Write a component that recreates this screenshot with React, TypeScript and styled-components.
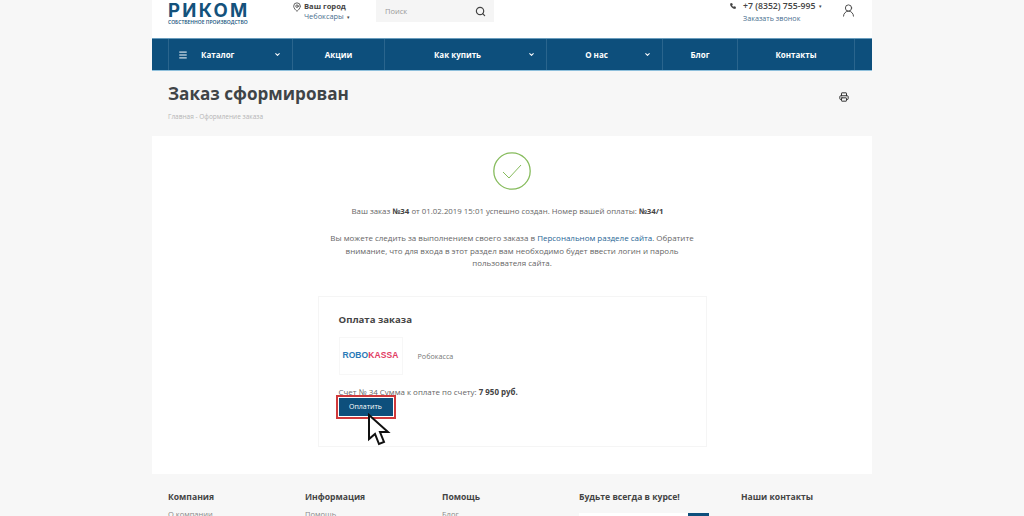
import { ReactElement } from 'react';
import styled, { createGlobalStyle } from 'styled-components';
import { ChevronDown, Menu, Search, MapPin, Phone, Printer, UserRound } from 'lucide-react';

const GlobalStyle = createGlobalStyle`
  html, body {
    margin: 0;
    height: 516px;
    overflow: hidden;
    background: #f7f7f7;
    font-family: "Open Sans", "Liberation Sans", sans-serif;
    color: #555;
  }
`;

const Page = styled.div`
  position: relative;
  width: 720px;
  height: 516px;
  margin: 0 auto;
  overflow: hidden;
`;

const Header = styled.header`
  display: flex;
  height: 38px;
  background: #fff;
  overflow: hidden;
`;

const Logo = styled.div`
  width: 124px;
  margin-left: 16px;
  padding-top: 1px;
`;

const LogoName = styled.div`
  font: 700 18.5px/18px Inter, sans-serif;
  letter-spacing: 2.3px;
  color: #14527c;
`;

const LogoNote = styled.div`
  font: 600 5px/6px "Open Sans", sans-serif;
  color: #14527c;
  white-space: nowrap;
`;

const City = styled.div`
  display: flex;
  gap: 2px;
  width: 84px;
  padding-top: 1px;
`;

const PinSlot = styled.div`
  display: flex;
  align-items: flex-start;
  padding-top: 1px;
  color: #444;
`;

const CityName = styled.div`
  font-size: 7.6px;
  line-height: 10px;
  font-weight: 700;
  color: #444;
`;

const LinkLine = styled.div`
  font-size: 7.4px;
  line-height: 11px;
  color: #4a6f8f;
  white-space: nowrap;
`;

const TinyArrow = styled.span`
  margin-left: 3px;
  font-size: 5px;
  color: #444;
`;

const SearchBox = styled.div`
  display: flex;
  align-items: center;
  justify-content: space-between;
  box-sizing: border-box;
  width: 118px;
  height: 22px;
  padding: 0 8px 0 9px;
  background: #f5f5f5;
  color: #999;
  font-size: 7.5px;
`;

const PhoneBlock = styled.div`
  margin-left: 236px;
  width: 111px;
`;

const PhoneLine = styled.div`
  display: flex;
  align-items: center;
  gap: 7px;
  font-size: 8.7px;
  line-height: 12px;
  font-weight: 600;
  color: #444;

  span {
    margin-left: -3px;
    font-size: 5px;
    font-weight: 400;
  }
`;

const CallLink = styled(LinkLine)`
  padding-left: 13px;
  line-height: 13px;
  font-size: 7.2px;
`;

const UserSlot = styled.div`
  display: flex;
  align-items: flex-start;
  width: 20px;
  padding-top: 3px;
  color: #444;
`;

const Nav = styled.nav`
  display: flex;
  box-sizing: border-box;
  height: 33px;
  background: #0d4f7c;
  border-top: 1px solid #6a9dbd;
  border-bottom: 1px solid #8fc0dc;
`;

const NavItem = styled.div<{ $width: number; $arrow?: boolean }>`
  position: relative;
  display: flex;
  align-items: center;
  justify-content: center;
  box-sizing: border-box;
  width: ${p => p.$width}px;
  padding-right: ${p => (p.$arrow ? 16 : 0)}px;
  border-left: 1px solid #2a658d;
  color: #fff;
  font-size: 8px;
  font-weight: 700;
  white-space: nowrap;
`;

const FirstNavItem = styled(NavItem)`
  margin-left: 16px;
  justify-content: flex-start;
  padding-left: 9px;
`;

const LastNavItem = styled(NavItem)`
  border-right: 1px solid #2a658d;
`;

const NavArrow = styled.span`
  position: absolute;
  right: 11px;
  top: 12px;
  display: flex;
`;

const BurgerLabel = styled.span`
  display: flex;
  align-items: center;
  gap: 13px;
`;

const TitleBand = styled.section`
  display: flex;
  justify-content: space-between;
  box-sizing: border-box;
  height: 65px;
  padding: 11px 23px 0 16px;
`;

const Title = styled.h1`
  margin: 0;
  font-size: 17.1px;
  line-height: 24px;
  font-weight: 700;
  color: #3f4447;
`;

const Crumbs = styled.div`
  margin-top: 6px;
  font-size: 6.5px;
  line-height: 10px;
  color: #b5b5b5;
`;

const PrintSlot = styled.div`
  display: flex;
  align-items: flex-start;
  padding-top: 10px;
  color: #333;
`;

const Content = styled.main`
  display: flex;
  flex-direction: column;
  align-items: center;
  box-sizing: border-box;
  height: 338px;
  padding-top: 16px;
  background: #fff;
`;

const Message = styled.p`
  width: 380px;
  margin: 0;
  font-size: 7.97px;
  line-height: 12.5px;
  text-align: center;
  color: #666;

  b { color: #444; }
  span { color: #1f6595; }
`;

const OrderMessage = styled(Message)`
  box-sizing: border-box;
  margin-top: 15px;
  padding-right: 9px;
  font-size: 7.85px;
`;

const NoticeMessage = styled(Message)`
  margin-top: 14.5px;
`;

const PayCard = styled.section`
  box-sizing: border-box;
  width: 389px;
  height: 151px;
  margin-top: 26px;
  padding: 16px 20px 0;
  border: 1px solid #f5f5f5;
`;

const PayTitle = styled.h3`
  margin: 0;
  font-size: 9.6px;
  line-height: 14px;
  font-weight: 700;
  color: #444;
`;

const Provider = styled.div`
  display: flex;
  align-items: center;
  gap: 15px;
  margin-top: 10px;
  font-size: 7.2px;
  color: #777;
`;

const ProviderLogo = styled.div`
  display: flex;
  align-items: center;
  justify-content: center;
  box-sizing: border-box;
  width: 64px;
  height: 38px;
  border: 1px solid #f7f7f7;
  font: 700 8.5px/1 "Liberation Sans", sans-serif;
  letter-spacing: 0.1px;
  color: #e23b63;

  span { color: #2a7ab8; }
`;

const Bill = styled.div`
  margin-top: 11px;
  font-size: 7.95px;
  line-height: 12px;
  color: #666;

  b { color: #444; }
`;

const PayButton = styled.button`
  display: block;
  width: 54px;
  height: 18px;
  margin-top: 0;
  padding: 0;
  border: 0;
  background: #0d4f7c;
  outline: 2px solid #d0393b;
  outline-offset: 1px;
  color: #fff;
  font: 400 7px/18px "Open Sans", sans-serif;
`;

const Cursor = styled.svg`
  position: absolute;
  left: 215px;
  top: 413px;
`;

const Footer = styled.footer`
  display: grid;
  grid-template-columns: 137px 137px 137px 162px 1fr;
  height: 26px;
  padding: 16px 0 0 16px;
  overflow: hidden;
`;

const FooterTitle = styled.div`
  font-size: 8.6px;
  line-height: 14px;
  font-weight: 700;
  color: #444;
  white-space: nowrap;
`;

const FooterLink = styled.div`
  margin-top: 5px;
  font-size: 7.5px;
  line-height: 11px;
  color: #888;
`;

const SubscribeRow = styled.div`
  display: flex;
  justify-content: flex-end;
  width: 130px;
  height: 14px;
  margin-top: 9px;
  background: #fff;
`;

const SubscribeButton = styled.div`
  width: 21px;
  background: #0d4f7c;
`;

function CheckBadge(): ReactElement {
  return (
    <svg width="38" height="38" viewBox="0 0 38 38" fill="none" stroke="#86bb5c">
      <circle cx="19" cy="19" r="18.2" strokeWidth="1.3" />
      <path d="M10 20l6 6 12-13" strokeWidth="1" />
    </svg>
  );
}

/**
 * Order confirmation page
 */
export default function App(): ReactElement {
  return (
    <Page>
      <GlobalStyle />
      <Header>
        <Logo>
          <LogoName>РИКОМ</LogoName>
          <LogoNote>СОБСТВЕННОЕ ПРОИЗВОДСТВО</LogoNote>
        </Logo>
        <City>
          <PinSlot>
            <MapPin size={10} strokeWidth={2} />
          </PinSlot>
          <div>
            <CityName>Ваш город</CityName>
            <LinkLine>Чебоксары<TinyArrow>▾</TinyArrow></LinkLine>
          </div>
        </City>
        <SearchBox>
          Поиск
          <Search size={11} strokeWidth={2.6} color="#444" />
        </SearchBox>
        <PhoneBlock>
          <PhoneLine>
            <Phone size={6} strokeWidth={3} fill="#444" />
            +7 (8352) 755-995
            <span>▾</span>
          </PhoneLine>
          <CallLink>Заказать звонок</CallLink>
        </PhoneBlock>
        <UserSlot>
          <UserRound size={15} strokeWidth={1.5} />
        </UserSlot>
      </Header>
      <Nav>
        <FirstNavItem $width={124}>
          <BurgerLabel>
            <Menu size={10} strokeWidth={2.4} />
            Каталог
          </BurgerLabel>
          <NavArrow><ChevronDown size={7} strokeWidth={3.5} /></NavArrow>
        </FirstNavItem>
        <NavItem $width={92}>Акции</NavItem>
        <NavItem $width={162} $arrow>
          Как купить
          <NavArrow><ChevronDown size={7} strokeWidth={3.5} /></NavArrow>
        </NavItem>
        <NavItem $width={116} $arrow>
          О нас
          <NavArrow><ChevronDown size={7} strokeWidth={3.5} /></NavArrow>
        </NavItem>
        <NavItem $width={75}>Блог</NavItem>
        <LastNavItem $width={118}>Контакты</LastNavItem>
      </Nav>
      <TitleBand>
        <div>
          <Title>Заказ сформирован</Title>
          <Crumbs>Главная - Оформление заказа</Crumbs>
        </div>
        <PrintSlot>
          <Printer size={10} strokeWidth={2.4} />
        </PrintSlot>
      </TitleBand>
      <Content>
        <CheckBadge />
        <OrderMessage>
          Ваш заказ <b>№34</b> от 01.02.2019 15:01 успешно создан. Номер вашей оплаты: <b>№34/1</b>
        </OrderMessage>
        <NoticeMessage>
          Вы можете следить за выполнением своего заказа в <span>Персональном разделе сайта</span>. Обратите
          внимание, что для входа в этот раздел вам необходимо будет ввести логин и пароль
          пользователя сайта.
        </NoticeMessage>
        <PayCard>
          <PayTitle>Оплата заказа</PayTitle>
          <Provider>
            <ProviderLogo><span>ROBO</span>KASSA</ProviderLogo>
            Робокасса
          </Provider>
          <Bill>Счет № 34 Сумма к оплате по счету: <b>7 950 руб.</b></Bill>
          <PayButton>Оплатить</PayButton>
        </PayCard>
      </Content>
      <Footer>
        <div>
          <FooterTitle>Компания</FooterTitle>
          <FooterLink>О компании</FooterLink>
        </div>
        <div>
          <FooterTitle>Информация</FooterTitle>
          <FooterLink>Помощь</FooterLink>
        </div>
        <div>
          <FooterTitle>Помощь</FooterTitle>
          <FooterLink>Блог</FooterLink>
        </div>
        <div>
          <FooterTitle>Будьте всегда в курсе!</FooterTitle>
          <SubscribeRow><SubscribeButton /></SubscribeRow>
        </div>
        <div>
          <FooterTitle>Наши контакты</FooterTitle>
        </div>
      </Footer>
      <Cursor width="24" height="34" viewBox="0 0 24 34">
        <path d="M2 2v24l6-5 4 10 5-2-4-10h8z" fill="#fff" stroke="#111" strokeWidth="2" strokeLinejoin="miter" />
      </Cursor>
    </Page>
  );
}
